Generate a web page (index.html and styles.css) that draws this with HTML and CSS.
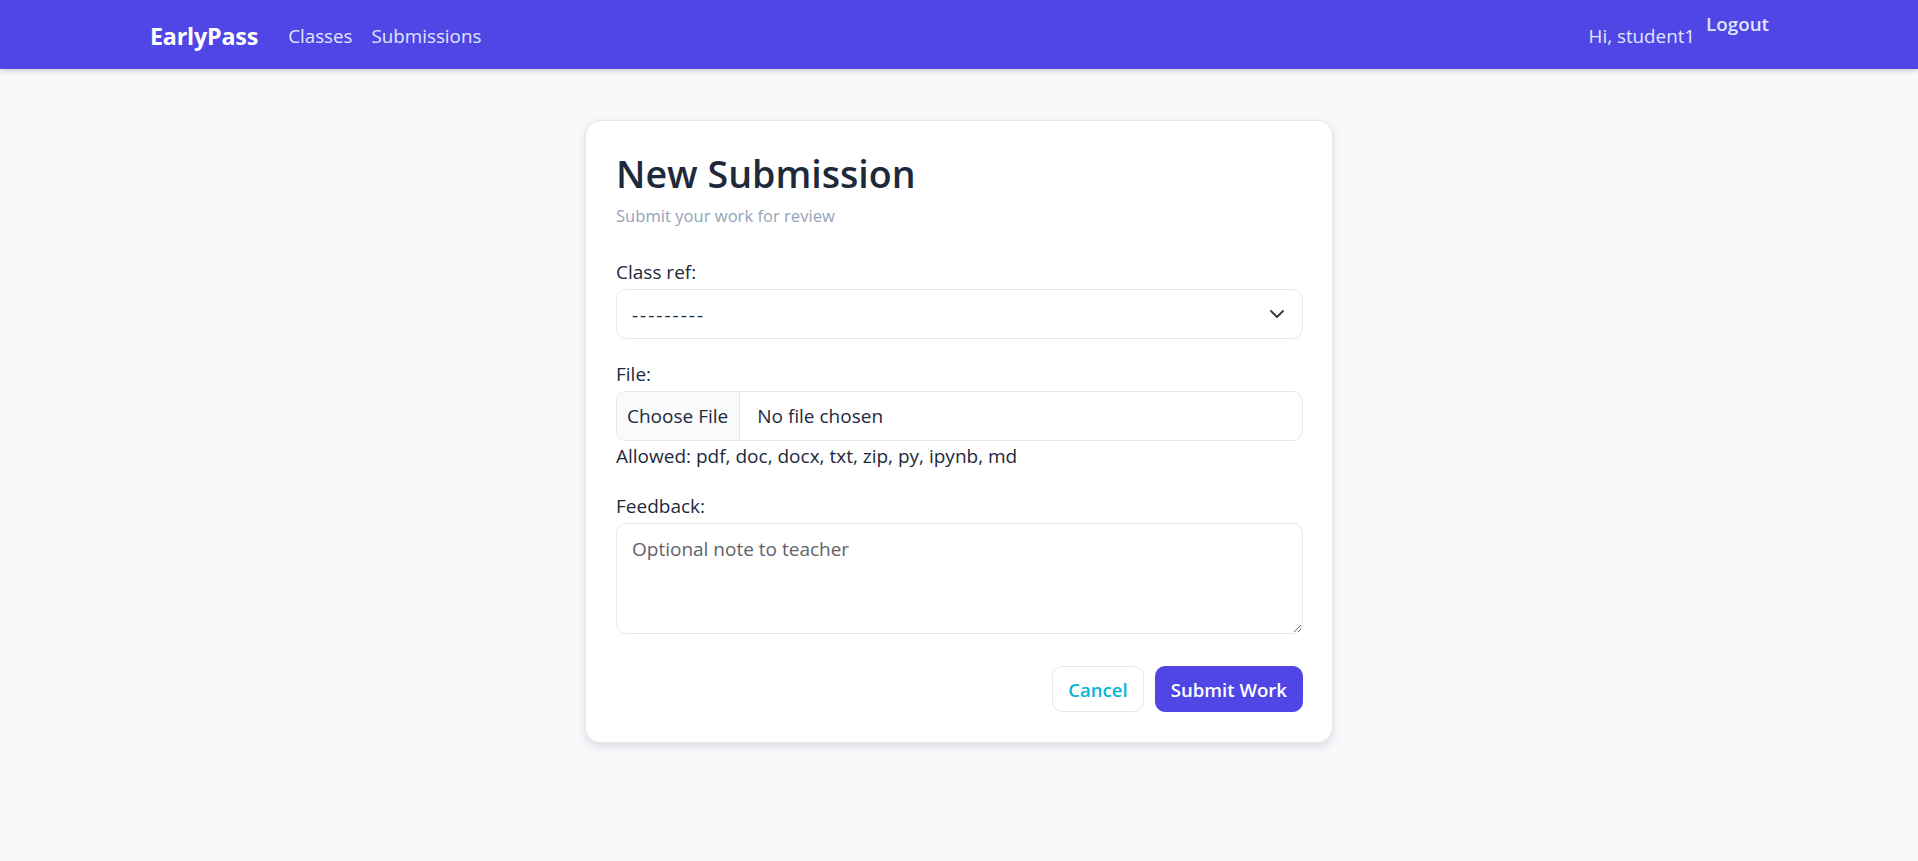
FILE: index.html
```html
<!DOCTYPE html>
<html lang="en">
<head>
<meta charset="utf-8">
<title>New Submission - EarlyPass</title>
<link rel="stylesheet" href="styles.css">
</head>
<body>
<header class="navbar">
  <div class="nav-inner">
    <nav class="nav-left">
      <a class="brand" href="#">EarlyPass</a>
      <a class="nav-link" href="#">Classes</a>
      <a class="nav-link" href="#">Submissions</a>
    </nav>
    <div class="nav-right">
      <span class="greeting">Hi, student1</span>
      <form class="logout-form">
        <button type="button" class="logout-btn">Logout</button>
      </form>
    </div>
  </div>
</header>

<main class="page">
  <section class="card">
    <h1 class="card-title">New Submission</h1>
    <p class="card-subtitle">Submit your work for review</p>

    <form class="form">
      <div class="form-group">
        <label class="form-label" for="class_ref">Class ref:</label>
        <div class="select-wrap">
          <select id="class_ref" class="form-control select">
            <option>---------</option>
          </select>
          <svg class="chevron" width="14" height="8" viewBox="0 0 14 8" aria-hidden="true">
            <path d="M1 1l6 6 6-6" fill="none" stroke="#343a40" stroke-width="1.8" stroke-linecap="round" stroke-linejoin="round"/>
          </svg>
        </div>
      </div>

      <div class="form-group">
        <label class="form-label" for="file">File:</label>
        <input id="file" class="form-control file-input" type="file">
        <div class="help-text">Allowed: pdf, doc, docx, txt, zip, py, ipynb, md</div>
      </div>

      <div class="form-group last">
        <label class="form-label" for="feedback">Feedback:</label>
        <textarea id="feedback" class="form-control textarea" placeholder="Optional note to teacher"></textarea>
      </div>

      <div class="actions">
        <a class="btn btn-outline" href="#">Cancel</a>
        <button type="button" class="btn btn-primary">Submit Work</button>
      </div>
    </form>
  </section>
</main>
</body>
</html>
```

FILE: styles.css
```css
* {
  box-sizing: border-box;
}

html, body {
  margin: 0;
  padding: 0;
}

body {
  background: #f8f9fb;
  font-family: "Open Sans", "Noto Sans", "Liberation Sans", sans-serif;
  color: #1e293b;
  min-height: 100vh;
}

a {
  text-decoration: none;
}

/* Navbar */
.navbar {
  background: #4f46e5;
  height: 69px;
  box-shadow: 0 2px 5px rgba(15, 23, 42, 0.18);
  position: relative;
  z-index: 1;
}

.nav-inner {
  max-width: 1620px;
  height: 100%;
  margin: 0 auto;
  display: flex;
  align-items: center;
  justify-content: space-between;
  padding: 2px 0 0 1px;
}

.nav-left {
  display: flex;
  align-items: center;
}

.brand {
  color: #ffffff;
  font-weight: 700;
  font-size: 23.3px;
  line-height: 34px;
  margin-right: 30px;
  letter-spacing: -0.2px;
}

.nav-link {
  color: #e0e7ff;
  font-size: 18.8px;
  line-height: 28px;
  margin-right: 19px;
}

.nav-right {
  display: flex;
  align-items: center;
  height: 100%;
  gap: 11px;
}

.greeting {
  color: #e0e7ff;
  font-size: 18.8px;
  line-height: 28px;
}

.logout-form {
  align-self: flex-start;
  margin: 8px 0 0;
}

.logout-btn {
  background: none;
  border: 0;
  padding: 0;
  color: #e0e7ff;
  font-family: inherit;
  font-size: 18.8px;
  font-weight: 600;
  line-height: 28px;
  cursor: pointer;
}

/* Page */
.page {
  padding-top: 51px;
}

.card {
  width: 748px;
  margin: 0 auto;
  background: #ffffff;
  border: 1px solid #e5e7eb;
  border-radius: 15px;
  padding: 29px 29px 30px 30px;
  box-shadow: 0 4px 10px rgba(15, 23, 42, 0.12);
}

.card-title {
  margin: 0 0 5px;
  font-size: 37.6px;
  line-height: 48px;
  font-weight: 600;
  color: #1e293b;
}

.card-subtitle {
  margin: 0 0 28px;
  font-size: 16.6px;
  line-height: 26px;
  color: #94a3b8;
}

.form-group {
  margin-bottom: 20px;
}

.form-group.last {
  margin-bottom: 0;
}

.form-label {
  display: block;
  font-size: 19px;
  line-height: 30px;
  margin-bottom: 2px;
  color: #1e293b;
}

.form-control {
  display: block;
  width: 100%;
  background: #ffffff;
  border: 1px solid #e2e8f0;
  border-radius: 10px;
  font-family: inherit;
  font-size: 19px;
  color: #1e293b;
}

.select-wrap {
  position: relative;
}

.select {
  height: 50px;
  padding: 2px 40px 0 15px;
  appearance: none;
  -webkit-appearance: none;
  outline: none;
  letter-spacing: 2px;
}

.chevron {
  position: absolute;
  right: 19px;
  top: 21px;
  pointer-events: none;
}

.file-input {
  height: 50px;
  padding: 0;
  line-height: 48px;
  overflow: hidden;
  color: #1e293b;
}

.file-input::file-selector-button {
  height: 48px;
  margin: 0 17px 0 0;
  padding: 0 11px 0 10px;
  border: 0;
  border-right: 1px solid #e2e8f0;
  background: #f8fafc;
  color: #1e293b;
  font-family: inherit;
  font-size: 19px;
}

.help-text {
  font-size: 19px;
  line-height: 30px;
  color: #1e293b;
}

.textarea {
  height: 111px;
  padding: 11px 15px;
  line-height: 28px;
  resize: vertical;
}

.textarea::placeholder {
  color: #5f6368;
}

.actions {
  display: flex;
  justify-content: flex-end;
  gap: 11px;
  margin-top: 32px;
}

.btn {
  display: inline-flex;
  align-items: center;
  justify-content: center;
  height: 46px;
  padding: 0 15px;
  border-radius: 10px;
  font-family: inherit;
  font-size: 18.6px;
  font-weight: 600;
  cursor: pointer;
}

.btn-outline {
  background: #ffffff;
  border: 1px solid #e2e8f0;
  color: #06b6d4;
}

.btn-primary {
  background: #4f46e5;
  border: 1px solid #4f46e5;
  color: #ffffff;
}
```
